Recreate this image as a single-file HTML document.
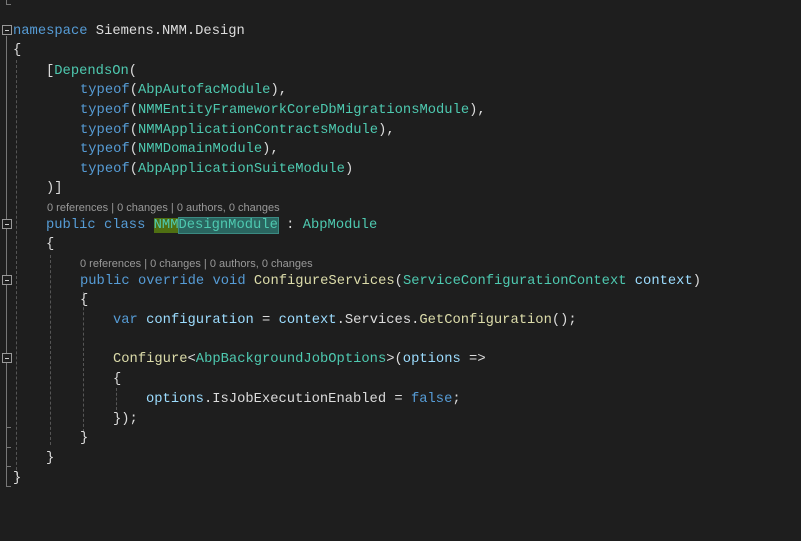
<!DOCTYPE html>
<html><head><meta charset="utf-8"><style>
body{margin:0;width:801px;height:541px;background:#1e1e1e;overflow:hidden;position:relative;font-family:"Liberation Mono",monospace;font-size:13.8px;color:#dcdcdc}
.l{position:absolute;height:20px;line-height:20px;white-space:pre}
.lens{position:absolute;font-family:"Liberation Sans",sans-serif;font-size:11px;color:#999;white-space:pre;line-height:14px}
.k{color:#569cd6}.t{color:#4ec9b0}.v{color:#9cdcfe}.m{color:#dcdcaa}
.box{position:absolute;left:2px;width:8px;height:8px;border:1px solid #999;background:#1e1e1e}
.box:after{content:"";position:absolute;left:2px;top:4px;width:4px;height:1px;background:#ccc}
.vl{position:absolute;width:1px;background:#777}
.g{position:absolute;width:0;border-left:1px dashed #555}
.h{position:absolute;width:5px;height:1px;background:#777}
</style></head><body>
<div class="vl" style="left:6px;top:0;height:4px"></div><div class="h" style="left:6px;top:4px"></div>
<div class="vl" style="left:6px;top:36px;height:450px"></div>
<div class="h" style="left:6px;top:486px"></div>
<div class="h" style="left:6px;top:466px"></div>
<div class="h" style="left:6px;top:447px"></div>
<div class="h" style="left:6px;top:427px"></div>
<div class="box" style="top:25px"></div>
<div class="box" style="top:219px"></div>
<div class="box" style="top:275px"></div>
<div class="box" style="top:353px"></div>
<div class="g" style="left:16px;top:60px;height:420px"></div>
<div class="g" style="left:50px;top:255px;height:190px"></div>
<div class="g" style="left:83px;top:292px;height:140px"></div>
<div class="g" style="left:116px;top:388px;height:22px"></div>

<div class="l" style="left:13px;top:22px"><span class="k">namespace</span> Siemens.NMM.Design</div>
<div class="l" style="left:13px;top:41px">{</div>
<div class="l" style="left:46px;top:62px">[<span class="t">DependsOn</span>(</div>
<div class="l" style="left:80px;top:81px"><span class="k">typeof</span>(<span class="t">AbpAutofacModule</span>),</div>
<div class="l" style="left:80px;top:101px"><span class="k">typeof</span>(<span class="t">NMMEntityFrameworkCoreDbMigrationsModule</span>),</div>
<div class="l" style="left:80px;top:121px"><span class="k">typeof</span>(<span class="t">NMMApplicationContractsModule</span>),</div>
<div class="l" style="left:80px;top:140px"><span class="k">typeof</span>(<span class="t">NMMDomainModule</span>),</div>
<div class="l" style="left:80px;top:160px"><span class="k">typeof</span>(<span class="t">AbpApplicationSuiteModule</span>)</div>
<div class="l" style="left:46px;top:179px">)]</div>
<div class="lens" style="left:47px;top:201px">0 references | 0 changes | 0 authors, 0 changes</div>
<div class="l" style="left:46px;top:216px"><span class="k">public</span> <span class="k">class</span> <span class="t"><span style="background:#4f6f12">NMM</span><span style="background:#2a6660;outline:1px solid #3b8a82">DesignModule</span></span> : <span class="t">AbpModule</span></div>
<div class="l" style="left:46px;top:235px">{</div>
<div class="lens" style="left:80px;top:257px">0 references | 0 changes | 0 authors, 0 changes</div>
<div class="l" style="left:80px;top:272px"><span class="k">public</span> <span class="k">override</span> <span class="k">void</span> <span class="m">ConfigureServices</span>(<span class="t">ServiceConfigurationContext</span> <span class="v">context</span>)</div>
<div class="l" style="left:80px;top:291px">{</div>
<div class="l" style="left:113px;top:311px"><span class="k">var</span> <span class="v">configuration</span> = <span class="v">context</span>.Services.<span class="m">GetConfiguration</span>();</div>
<div class="l" style="left:113px;top:350px"><span class="m">Configure</span>&lt;<span class="t">AbpBackgroundJobOptions</span>&gt;(<span class="v">options</span> =&gt;</div>
<div class="l" style="left:113px;top:370px">{</div>
<div class="l" style="left:146px;top:390px"><span class="v">options</span>.IsJobExecutionEnabled = <span class="k">false</span>;</div>
<div class="l" style="left:113px;top:410px">});</div>
<div class="l" style="left:80px;top:429px">}</div>
<div class="l" style="left:46px;top:449px">}</div>
<div class="l" style="left:13px;top:469px">}</div>
</body></html>
